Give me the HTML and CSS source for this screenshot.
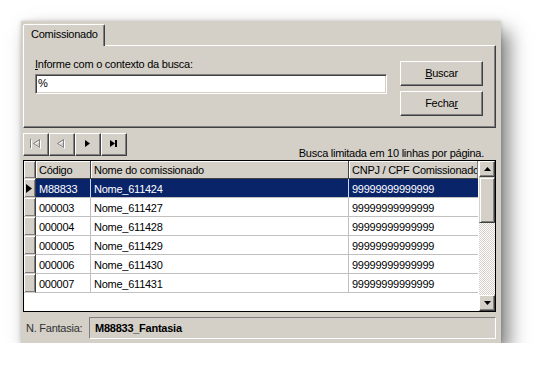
FILE: index.html
```html
<!DOCTYPE html>
<html>
<head>
<meta charset="utf-8">
<link rel="stylesheet" href="styles.css">
</head>
<body>
<div class="window">
  <div class="tabs"><div class="tab">Comissionado</div></div>
  <div class="page">
    <div class="search">
      <div class="label"><u>I</u>nforme com o contexto da busca:</div>
      <div class="input">%</div>
    </div>
    <div class="buttons">
      <div class="btn"><span><u>B</u>uscar</span></div>
      <div class="btn"><span>Fecha<u>r</u></span></div>
    </div>
  </div>
  <div class="navrow">
    <div class="nav">
      <div class="nbtn"><svg width="24" height="21" viewBox="0 0 24 21"><g fill="none" stroke="#fff"><path d="M7.5 6v9"/><path d="M16.5 6.5v8l-6-4z"/></g><g fill="none" stroke="#808080"><path d="M6.5 5v9"/><path d="M15.5 5.5v8l-6-4z"/></g></svg></div>
      <div class="nbtn"><svg width="24" height="21" viewBox="0 0 24 21"><path d="M14.5 6.5v8l-6-4z" fill="none" stroke="#fff"/><path d="M13.5 5.5v8l-6-4z" fill="none" stroke="#808080"/></svg></div>
      <div class="nbtn"><svg width="24" height="21" viewBox="0 0 24 21"><path d="M9 6l5 3.5-5 3.5z" fill="#000"/></svg></div>
      <div class="nbtn"><svg width="24" height="21" viewBox="0 0 24 21"><path d="M8 6l5 3.5-5 3.5z" fill="#000"/><rect x="13" y="6" width="2" height="7" fill="#000"/></svg></div>
    </div>
    <div class="info">Busca limitada em 10 linhas por página.</div>
  </div>
  <div class="grid">
    <table class="tbl">
      <colgroup><col class="c-ind"><col class="c-cod"><col class="c-nome"><col class="c-cnpj"></colgroup>
      <thead>
        <tr><th class="ind"></th><th>Código</th><th>Nome do comissionado</th><th>CNPJ / CPF Comissionado</th></tr>
      </thead>
      <tbody>
        <tr class="sel"><td class="ind"><svg width="6" height="9" viewBox="0 0 6 9"><path d="M0 0l6 4.5L0 9z" fill="#000"/></svg></td><td>M88833</td><td>Nome_611424</td><td>99999999999999</td></tr>
        <tr><td class="ind"></td><td>000003</td><td>Nome_611427</td><td>99999999999999</td></tr>
        <tr><td class="ind"></td><td>000004</td><td>Nome_611428</td><td>99999999999999</td></tr>
        <tr><td class="ind"></td><td>000005</td><td>Nome_611429</td><td>99999999999999</td></tr>
        <tr><td class="ind"></td><td>000006</td><td>Nome_611430</td><td>99999999999999</td></tr>
        <tr><td class="ind"></td><td>000007</td><td>Nome_611431</td><td>99999999999999</td></tr>
      </tbody>
    </table>
    <div class="scroll">
      <div class="sbtn"><svg width="7" height="4" viewBox="0 0 7 4"><path d="M3.5 0L7 4H0z" fill="#000"/></svg></div>
      <div class="thumb"></div>
      <div class="track"></div>
      <div class="sbtn"><svg width="7" height="4" viewBox="0 0 7 4"><path d="M0 0h7L3.5 4z" fill="#000"/></svg></div>
    </div>
  </div>
  <div class="fantasia">
    <span class="flabel">N. Fantasia:</span>
    <div class="field">M88833_Fantasia</div>
  </div>
</div>
</body>
</html>
```
FILE: styles.css
```css
* { box-sizing: border-box; }
html, body { margin: 0; background: #fff; }
body {
  padding: 21px 0 0 21px;
  font: 11px "Liberation Sans", Arial, sans-serif;
  letter-spacing: -0.25px;
  color: #000;
}
.window {
  width: 480px;
  height: 322px;
  background: #d4d0c8;
  padding: 3px 5px 0 2px;
  display: flex;
  flex-direction: column;
  box-shadow: 0 0 4px rgba(0,0,0,0.18), 8px 10px 18px rgba(0,0,0,0.5);
}
.tabs { height: 21px; display: flex; position: relative; z-index: 1; }
.tab {
  width: 82px;
  height: 22px;
  padding: 3px 0 0 7px;
  line-height: 13px;
  background: #d4d0c8;
  border: 1px solid;
  border-bottom: none;
  border-color: #fff #404040 transparent #fff;
  border-radius: 2px 2px 0 0;
  box-shadow: inset -1px 0 #808080;
}
.page {
  height: 83px;
  border: 1px solid;
  border-color: #fff #404040 #404040 #fff;
  box-shadow: inset -1px -1px #808080;
  display: flex;
  padding: 12px 0 0 11px;
}
.search { width: 352px; }
.label { height: 13px; line-height: 13px; }
.input {
  margin-top: 3px;
  height: 20px;
  width: 352px;
  background: #fff;
  border: 1px solid;
  border-color: #808080 #fff #fff #808080;
  box-shadow: inset 1px 1px #404040, inset -1px -1px #d4d0c8;
  padding: 2px 0 0 2px;
  line-height: 13px;
}
.buttons {
  margin: 3px 0 0 13px;
  display: flex;
  flex-direction: column;
  gap: 5px;
}
.btn, .nbtn, .sbtn {
  border: 1px solid;
  border-color: #fff #404040 #404040 #fff;
  box-shadow: inset -1px -1px #808080;
  background: #d4d0c8;
  display: flex;
  align-items: center;
  justify-content: center;
}
.btn { width: 83px; height: 25px; line-height: 13px; }
.navrow {
  margin-top: 5px;
  height: 27px;
  display: flex;
  justify-content: space-between;
  align-items: flex-start;
}
.nav { display: flex; }
.nbtn { width: 26px; height: 23px; }
.nbtn svg { display: block; }
.info { align-self: flex-end; line-height: 13px; margin-right: 12px; }
.grid {
  height: 152px;
  border: 1px solid #000;
  background: #fff;
  display: flex;
}
.tbl {
  width: 454px;
  table-layout: fixed;
  border-collapse: separate;
  border-spacing: 0;
  align-self: flex-start;
}
.c-ind { width: 12px; }
.c-cod { width: 55px; }
.c-nome { width: 258px; }
.c-cnpj { width: 129px; }
.tbl th, .tbl td {
  height: 18px;
  padding: 1px 0 0 3px;
  line-height: 16px;
  font-weight: normal;
  text-align: left;
  white-space: nowrap;
  overflow: hidden;
}
.tbl th {
  height: 18px;
  padding-top: 0;
  background: #d4d0c8;
  border-right: 1px solid #404040;
  border-bottom: 1px solid #404040;
  box-shadow: inset 1px 1px #fff;
}
.tbl th:last-child { border-right: 1px solid #808080; }
.tbl td {
  height: 19px;
  border-right: 1px solid #c0c0c0;
  border-bottom: 1px solid #c0c0c0;
}
.tbl td:last-child { border-right: none; }
.tbl .ind {
  padding: 0;
  background: #d4d0c8;
  border-right: 1px solid #404040;
  border-bottom: 1px solid #d4d0c8;
  box-shadow: inset 1px 1px #fff, inset -1px -1px #808080;
}
.tbl td.ind svg { display: block; margin-left: 2px; }
.sel td { background: #0a246a; color: #fff; border-right-color: #d0d8f0; }
.scroll {
  width: 16px;
  margin-left: auto;
  display: flex;
  flex-direction: column;
}
.sbtn { width: 16px; height: 16px; }
.sbtn svg { display: block; }
.thumb {
  height: 46px;
  background: #d4d0c8;
  border: 1px solid;
  border-color: #d4d0c8 #404040 #404040 #d4d0c8;
  box-shadow: inset 1px 1px #fff, inset -1px -1px #808080;
}
.track {
  flex: 1;
  background-image: conic-gradient(#fff 25%, #d4d0c8 0 50%, #fff 0 75%, #d4d0c8 0);
  background-size: 2px 2px;
}
.fantasia {
  margin-top: 5px;
  display: flex;
  align-items: center;
  padding-left: 3px;
  line-height: 13px;
}
.flabel { width: 63px; color: #303030; }
.field {
  width: 407px;
  height: 22px;
  border: 1px solid;
  border-color: #808080 #fff #fff #808080;
  display: flex;
  align-items: center;
  padding-left: 5px;
  font-weight: bold;
}
```
